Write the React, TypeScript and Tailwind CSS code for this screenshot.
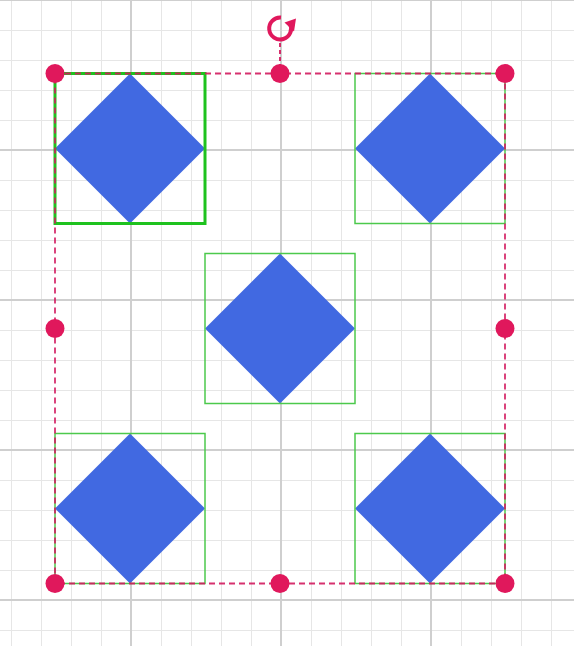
export default function App() {
  const boxes = [
    { x: 55, y: 73.5, active: true },
    { x: 355, y: 73.5 },
    { x: 205, y: 253.5 },
    { x: 55, y: 433.5 },
    { x: 355, y: 433.5 },
  ];
  const handles = [
    [55, 73.5], [280, 73.5], [505, 73.5],
    [55, 328.5], [505, 328.5],
    [55, 583.5], [280, 583.5], [505, 583.5],
  ];
  const minorX = Array.from({ length: 20 }, (_, i) => 11 + i * 30);
  const minorY = Array.from({ length: 22 }, (_, i) => i * 30);
  const majorX = [131, 281, 431];
  const majorY = [0, 150, 300, 450, 600];

  return (
    <div className="w-[574px] h-[646px] bg-white overflow-hidden">
      <svg width="574" height="646" viewBox="0 0 574 646" className="block">
        {/* grid */}
        {minorX.map((x) => (
          <line key={'mx' + x} x1={x + 0.5} y1={0} x2={x + 0.5} y2={646} stroke="#e6e6e6" strokeWidth={1} />
        ))}
        {minorY.map((y) => (
          <line key={'my' + y} x1={0} y1={y + 0.5} x2={574} y2={y + 0.5} stroke="#e6e6e6" strokeWidth={1} />
        ))}
        {majorX.map((x) => (
          <line key={'Mx' + x} x1={x} y1={0} x2={x} y2={646} stroke="#cfcfcf" strokeWidth={2} />
        ))}
        {majorY.map((y) => (
          <line key={'My' + y} x1={0} y1={y} x2={574} y2={y} stroke="#cfcfcf" strokeWidth={2} />
        ))}

        {/* shapes */}
        {boxes.map((b) => (
          <polygon
            key={'d' + b.x + b.y}
            points={`${b.x + 75},${b.y} ${b.x + 150},${b.y + 75} ${b.x + 75},${b.y + 150} ${b.x},${b.y + 75}`}
            fill="#4169e1"
          />
        ))}
        {boxes.map((b) => (
          <rect
            key={'b' + b.x + b.y}
            x={b.x}
            y={b.y}
            width={150}
            height={150}
            fill="none"
            stroke={b.active ? '#1ec21e' : '#4cc94c'}
            strokeWidth={b.active ? 3 : 1.5}
          />
        ))}

        {/* selection */}
        <rect
          x={55}
          y={73.5}
          width={450}
          height={510}
          fill="none"
          stroke="#d21a5e"
          strokeOpacity={0.9}
          strokeWidth={1.8}
          strokeDasharray="6 4"
        />
        <line x1={280} y1={43} x2={280} y2={73} stroke="#d21a5e" strokeWidth={1.8} strokeDasharray="4 3" />
        <path d="M281 17.5 A11 11 0 1 0 290 23.5" fill="none" stroke="#e0185c" strokeWidth={4} />
        <polygon points="284.5,22.5 296,18.5 294,31.5" fill="#e0185c" />
        {handles.map(([x, y]) => (
          <circle key={'h' + x + y} cx={x} cy={y} r={9.5} fill="#e0185c" />
        ))}
      </svg>
    </div>
  );
}
